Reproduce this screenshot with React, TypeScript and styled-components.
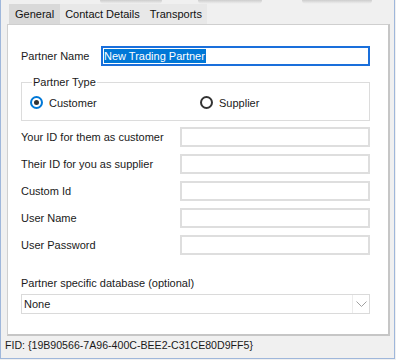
import React from "react";
import styled, { createGlobalStyle } from "styled-components";

const GlobalStyle = createGlobalStyle`
  body {
    margin: 0;
    background: #f0f0f0;
    font-family: "Liberation Sans", Arial, sans-serif;
    font-size: 11px;
    color: #1a1a1a;
  }
`;

const Window = styled.div`
  box-sizing: border-box;
  width: 395px;
  height: 359px;
  background: #f0f0f0;
  border-left: 1px solid #9fb7db;
  border-right: 1px solid #9fb7db;
  border-bottom: 1px solid #9fb7db;
  display: flex;
  flex-direction: column;
`;

const ShadowStrip = styled.div`
  height: 4px;
  display: flex;
  overflow: hidden;
`;

const Shadow = styled.div<{ $left: number; $width: number }>`
  margin-left: ${(p) => p.$left}px;
  width: ${(p) => p.$width}px;
  height: 4px;
  border-radius: 0 0 14px 14px;
  background: linear-gradient(to bottom, #cdcdcd, #ebebeb 80%, #f0f0f0);
`;

const TabBar = styled.div`
  display: flex;
  height: 20px;
  padding-left: 8px;
`;

const Tab = styled.div<{ $active?: boolean }>`
  display: flex;
  align-items: center;
  padding: 0 ${(p) => (p.$active ? 6 : 5)}px;
  background: ${(p) => (p.$active ? "#d9d9d9" : "#e8e8e8")};
  color: #111;
`;

const Panel = styled.div`
  box-sizing: border-box;
  margin-left: 6px;
  width: 383px;
  height: 312px;
  background: #fff;
  border-top: 1px solid #cfcfcf;
  border-left: 1px solid #cfcfcf;
  border-right: 2px solid #c6c6c6;
  border-bottom: 2px solid #c6c6c6;
  padding: 21px 0 0 13px;
  display: flex;
  flex-direction: column;
`;

const NameRow = styled.div`
  display: flex;
  align-items: center;
  height: 20px;
`;

const Label = styled.span<{ $width?: number }>`
  width: ${(p) => (p.$width ? `${p.$width}px` : "auto")};
  flex-shrink: 0;
  white-space: nowrap;
`;

const NameInput = styled.div`
  box-sizing: border-box;
  width: 269px;
  height: 20px;
  border: 2px solid #1a6fdb;
  display: flex;
  align-items: center;
  padding-left: 1px;
`;

const Selection = styled.span`
  background: #0078d7;
  color: #fff;
  line-height: 14px;
  padding-right: 1px;
`;

const GroupBox = styled.fieldset`
  box-sizing: border-box;
  width: 349px;
  height: 45px;
  min-width: 0;
  margin: 10px 0 0;
  padding: 8px 0 0 8px;
  border: 1px solid #dcdcdc;
`;

const Legend = styled.legend`
  padding: 0 1px;
  margin-left: 2px;
  line-height: 12px;
`;

const RadioRow = styled.div`
  display: grid;
  grid-template-columns: 170px 1fr;
  align-items: center;
  height: 13px;
`;

const Radio = styled.label`
  display: flex;
  align-items: center;
  gap: 6px;
`;

const RadioCircle = styled.span<{ $checked?: boolean }>`
  box-sizing: border-box;
  width: 13px;
  height: 13px;
  border-radius: 50%;
  border: 2px solid ${(p) => (p.$checked ? "#0078d7" : "#333")};
  display: flex;
  align-items: center;
  justify-content: center;
  &::after {
    content: "";
    width: 5px;
    height: 5px;
    border-radius: 50%;
    background: ${(p) => (p.$checked ? "#333" : "transparent")};
  }
`;

const Fields = styled.div`
  display: flex;
  flex-direction: column;
  gap: 7px;
  margin-top: 6px;
`;

const FieldRow = styled.div`
  display: flex;
  align-items: center;
  height: 20px;
`;

const TextBox = styled.div`
  box-sizing: border-box;
  width: 190px;
  height: 20px;
  border: 2px solid #dedede;
  background: #fff;
`;

const DbLabel = styled.div`
  margin-top: 21px;
  height: 14px;
  line-height: 14px;
`;

const Select = styled.div`
  box-sizing: border-box;
  margin-top: 4px;
  width: 349px;
  height: 20px;
  border: 1px solid #dadada;
  display: flex;
  align-items: center;
`;

const SelectValue = styled.span`
  flex: 1;
  padding-left: 2px;
`;

const Arrow = styled.span`
  width: 16px;
  height: 100%;
  border-left: 1px solid #ececec;
  display: flex;
  align-items: center;
  justify-content: center;
`;

const Footer = styled.div`
  padding: 2px 0 0 4px;
  height: 14px;
  line-height: 14px;
  font-size: 10.6px;
`;

const fields = [
  "Your ID for them as customer",
  "Their ID for you as supplier",
  "Custom Id",
  "User Name",
  "User Password",
];

export default function App() {
  return (
    <>
      <GlobalStyle />
      <Window>
        <ShadowStrip>
          <Shadow $left={99} $width={62} />
          <Shadow $left={36} $width={64} />
          <Shadow $left={40} $width={70} />
        </ShadowStrip>
        <TabBar>
          <Tab $active>General</Tab>
          <Tab>Contact Details</Tab>
          <Tab>Transports</Tab>
        </TabBar>
        <Panel>
          <NameRow>
            <Label $width={80}>Partner Name</Label>
            <NameInput>
              <Selection>New Trading Partner</Selection>
            </NameInput>
          </NameRow>
          <GroupBox>
            <Legend>Partner Type</Legend>
            <RadioRow>
              <Radio>
                <RadioCircle $checked />
                Customer
              </Radio>
              <Radio>
                <RadioCircle />
                Supplier
              </Radio>
            </RadioRow>
          </GroupBox>
          <Fields>
            {fields.map((f) => (
              <FieldRow key={f}>
                <Label $width={159}>{f}</Label>
                <TextBox />
              </FieldRow>
            ))}
          </Fields>
          <DbLabel>Partner specific database (optional)</DbLabel>
          <Select>
            <SelectValue>None</SelectValue>
            <Arrow>
              <svg width="11" height="6" viewBox="0 0 11 6">
                <path d="M0.5 0.5 L5.5 5.5 L10.5 0.5" fill="none" stroke="#a0a0a0" strokeWidth="1" />
              </svg>
            </Arrow>
          </Select>
        </Panel>
        <Footer>FID: {"{19B90566-7A96-400C-BEE2-C31CE80D9FF5}"}</Footer>
      </Window>
    </>
  );
}
